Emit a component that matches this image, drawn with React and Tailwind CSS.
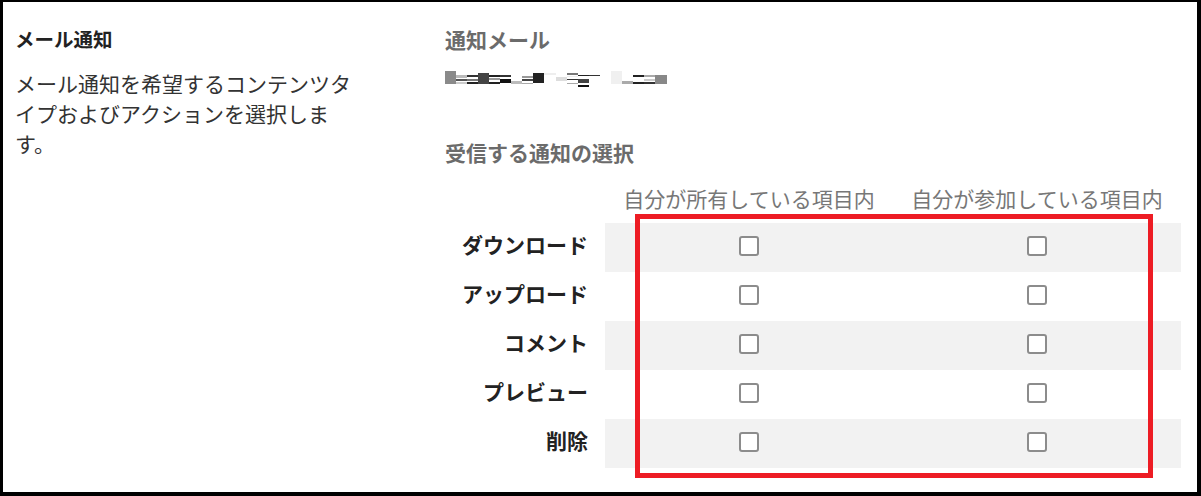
import { useState } from 'react';

const FONT = { fontFamily: '"Noto Sans CJK JP", "Noto Sans", sans-serif' };

const ROWS = ['ダウンロード', 'アップロード', 'コメント', 'プレビュー', '削除'];

// pixelated (redacted) email address
const BLUR = [
  [0, 72, 11, 13, '#8a8a8a'],
  [11, 76, 11, 3, '#bbbbbb'], [11, 80, 11, 2, '#555555'], [11, 83, 11, 2, '#cccccc'],
  [22, 76, 11, 2, '#333333'], [22, 80, 11, 2, '#777777'], [22, 83, 11, 2, '#222222'],
  [33, 74, 11, 11, '#444444'],
  [44, 76, 11, 2, '#222222'], [44, 79, 11, 2, '#999999'], [44, 83, 11, 2, '#222222'],
  [55, 76, 11, 2, '#333333'], [55, 80, 11, 4, '#111111'],
  [66, 82, 11, 3, '#bbbbbb'],
  [77, 77, 11, 2, '#999999'], [77, 80, 11, 2, '#444444'], [77, 84, 11, 1, '#aaaaaa'],
  [88, 74, 11, 10, '#222222'],
  [99, 74, 12, 2, '#eeeeee'],
  [111, 78, 11, 4, '#dddddd'],
  [122, 74, 11, 2, '#777777'], [122, 77, 11, 1, '#eeeeee'], [122, 80, 11, 1, '#333333'], [122, 84, 11, 1, '#aaaaaa'],
  [133, 76, 11, 1, '#222222'], [133, 80, 11, 4, '#444444'], [133, 86, 11, 2, '#111111'],
  [144, 76, 11, 1, '#333333'],
  [166, 72, 11, 13, '#f0f0f0'],
  [177, 82, 11, 3, '#aaaaaa'],
  [188, 76, 11, 2, '#222222'], [188, 83, 11, 2, '#222222'],
  [199, 76, 11, 2, '#aaaaaa'], [199, 80, 11, 2, '#cccccc'], [199, 83, 11, 2, '#333333'],
  [210, 76, 12, 9, '#888888'],
];

function Box({ checked, onToggle }) {
  return (
    <button
      type="button"
      onClick={onToggle}
      className="w-5 h-5 rounded-[3px] border-2 border-[#8c8c8c] bg-white mb-1"
    >
      {checked && <span className="block w-2 h-2 m-auto bg-[#555]" />}
    </button>
  );
}

export default function App() {
  const [checks, setChecks] = useState({});
  const toggle = (k) => setChecks(prev => ({ ...prev, [k]: !prev[k] }));

  return (
    <div style={FONT} className="relative w-[1201px] h-[496px] bg-white border-black border-t-2 border-l-[3px] border-r-4 border-b-4 flex">

      {/* left: section description */}
      <div className="w-[442px] pl-3 pt-[22px]">
        <h2 className="text-[19.5px] leading-[30px] font-bold text-[#222]">メール通知</h2>
        <p className="mt-[14px] w-[350px] text-[21px] leading-[30px] text-[#333]">
          メール通知を希望するコンテンツタイプおよびアクションを選択します。
        </p>
      </div>

      {/* right: settings */}
      <div className="flex-1 pt-[22px]">
        <h3 className="text-[21px] leading-[30px] font-bold text-[#6b6b6b]">通知メール</h3>
        <svg width="224" height="17" viewBox="0 72 224 17" className="mt-[17px] block">
          {BLUR.map(([x, y, w, h, c], i) => (
            <rect key={i} x={x} y={y} width={w} height={h} fill={c} />
          ))}
        </svg>
        <h3 className="mt-[49px] text-[21px] leading-[30px] font-bold text-[#6b6b6b]">受信する通知の選択</h3>

        <div className="mt-[16px] grid grid-cols-[160px_288px_288px]">
          <div />
          <div className="h-[40px] text-center text-[21px] leading-[30px] text-[#777]">自分が所有している項目内</div>
          <div className="h-[40px] text-center text-[21px] leading-[30px] text-[#777]">自分が参加している項目内</div>

          {ROWS.map((label, i) => {
            const bg = i % 2 === 0 ? 'bg-[#f2f2f2]' : 'bg-white';
            return [
              <div key={label + 'l'} className="h-[49px] flex items-center justify-end pr-[17px] pb-[5px] text-[21px] font-bold text-[#222]">
                {label}
              </div>,
              <div key={label + 'a'} className={`h-[49px] flex items-center justify-center ${bg}`}>
                <Box checked={checks[label + 'a']} onToggle={() => toggle(label + 'a')} />
              </div>,
              <div key={label + 'b'} className={`h-[49px] flex items-center justify-center ${bg}`}>
                <Box checked={checks[label + 'b']} onToggle={() => toggle(label + 'b')} />
              </div>,
            ];
          })}
        </div>
      </div>

      {/* red highlight annotation */}
      <div className="absolute left-[632px] top-[212px] w-[518px] h-[264px] border-[5px] border-[#ed1c24] pointer-events-none" />
    </div>
  );
}
